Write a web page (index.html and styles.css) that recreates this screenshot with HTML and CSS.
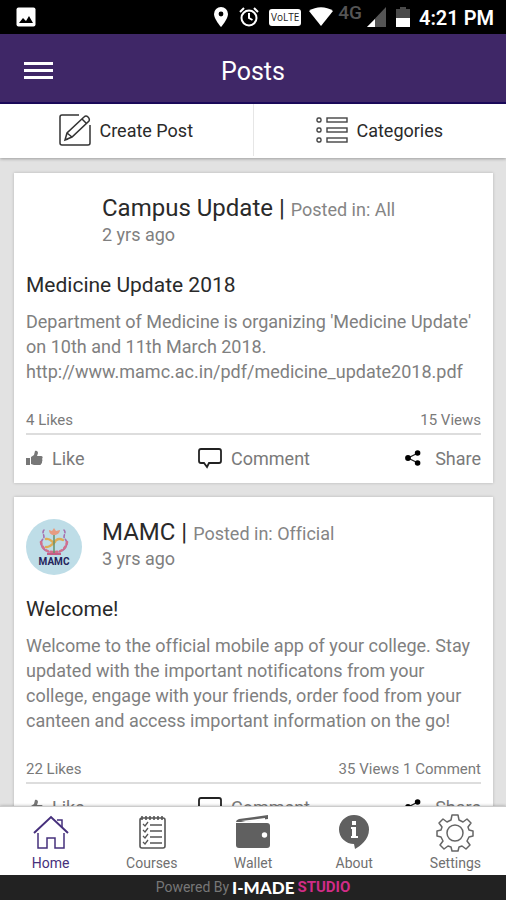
FILE: index.html
```html
<!DOCTYPE html>
<html lang="en">
<head>
    <meta charset="UTF-8">
    <meta name="viewport" content="width=device-width, initial-scale=1.0">
    <title>Posts</title>
    <link rel="stylesheet" href="styles.css">
</head>
<body>

    <!-- Shared icons for the post actions -->
    <svg class="icon-defs" aria-hidden="true">
        <symbol id="icon-like" viewBox="0 0 18 18">
            <path d="M0 9h4v7H0z" fill="#777"/>
            <path d="M5 8l3-2 1-4c2-1 3 1 3 2l-1 3h4c2 0 2 2 1 3 1 1 0 2 0 3 0 1 0 1-1 2 0 1-1 1-2 1H8l-3-1z" fill="#777"/>
        </symbol>
        <symbol id="icon-comment" viewBox="0 0 26 22">
            <path d="M4 2h18q2 0 2 2v10q0 2-2 2H12l-2 4-3-4H4q-2 0-2-2V4q0-2 2-2z" fill="none" stroke="#222" stroke-width="1.8"/>
        </symbol>
        <symbol id="icon-share" viewBox="0 0 16 16">
            <path d="M13 3L3 8l10 5" fill="none" stroke="#222" stroke-width="1.3"/>
            <circle cx="12.6" cy="3" r="2.8"/>
            <circle cx="3" cy="8" r="2.9"/>
            <circle cx="12.6" cy="13" r="2.8"/>
        </symbol>
    </svg>

    <div class="status-bar">
        <svg class="status-picture" width="20" height="20" viewBox="0 0 20 20">
            <rect x="0.500" y="0.500" width="19" height="19" rx="2" fill="#fff"/>
            <path d="M3 16l4-5 3 3 3-5 4 7z"/>
        </svg>
        <svg width="16" height="20" viewBox="0 0 16 20">
            <path d="M8 0a7 7 0 0 0-7 7c0 5 7 13 7 13s7-8 7-13a7 7 0 0 0-7-7z" fill="#fff"/>
            <circle cx="8" cy="7" r="2.4"/>
        </svg>
        <svg class="status-alarm" width="20" height="20" viewBox="0 0 20 20" fill="none" stroke="#fff" stroke-width="2">
            <circle cx="10" cy="11" r="7.5"/>
            <path d="M10 6v5l3.5 2M1 5l4-4M19 5l-4-4"/>
        </svg>
        <span class="volte">VoLTE</span>
        <svg class="status-wifi" width="26" height="20" viewBox="0 0 26 20">
            <path d="M1 4C8-1 18-1 25 4L13 19z" fill="#fff"/>
        </svg>
        <span class="network">4G</span>
        <svg width="21" height="20" viewBox="0 0 21 20">
            <path d="M20 0v20H1z" fill="#555"/>
            <path d="M9 12v8H1z" fill="#fff"/>
        </svg>
        <svg class="status-battery" width="14" height="20" viewBox="0 0 14 20">
            <path d="M4 0h6v2h4v10H0V2h4z" fill="#4a4a4a"/>
            <path d="M0 11h14v9H0z" fill="#fff"/>
        </svg>
        <span class="clock">4:21 PM</span>
    </div>

    <header class="header">
        <button class="menu-btn" aria-label="Menu"><span></span><span></span><span></span></button>
        <h1>Posts</h1>
    </header>

    <div class="toolbar">
        <button>
            <svg width="32" height="32" viewBox="0 0 32 32" fill="none" stroke="#333" stroke-width="1.5">
                <path d="M20 1H3Q1 1 1 3v26q0 2 2 2h26q2 0 2-2V11"/>
                <path d="M6 26l2-7L25 3q2-2 4 0t1 4L13 23zM8 19l5 4M23 5l5 5M6 26l3-1"/>
            </svg>
            Create Post
        </button>
        <button>
            <svg width="32" height="28" viewBox="0 0 32 28" fill="none" stroke="#444" stroke-width="1.4">
                <rect x="1" y="2" width="4" height="4" rx="1.5"/>
                <rect x="11" y="2" width="20" height="4"/>
                <rect x="1" y="12" width="4" height="4" rx="1.5"/>
                <rect x="11" y="12" width="20" height="4"/>
                <rect x="1" y="22" width="4" height="4" rx="1.5"/>
                <rect x="11" y="22" width="20" height="4"/>
            </svg>
            Categories
        </button>
    </div>

    <main class="feed">
        <article class="post">
            <div class="post-header">
                <div class="avatar"></div>
                <div>
                    <div class="author">Campus Update | <span>Posted in: All</span></div>
                    <div class="time">2 yrs ago</div>
                </div>
            </div>
            <h2>Medicine Update 2018</h2>
            <p>Department of Medicine is organizing 'Medicine Update' on 10th and 11th March 2018. http://www.mamc.ac.in/pdf/medicine_update2018.pdf</p>
            <div class="stats"><span>4 Likes</span><span>15 Views</span></div>
            <div class="actions">
                <button class="like"><svg width="18" height="18"><use href="#icon-like"/></svg>Like</button>
                <button><svg width="26" height="22"><use href="#icon-comment"/></svg>Comment</button>
                <button class="share"><svg width="16" height="16"><use href="#icon-share"/></svg>Share</button>
            </div>
        </article>

        <article class="post">
            <div class="post-header">
                <div class="avatar">
                    <svg width="56" height="56" viewBox="0 0 56 56">
                        <circle cx="28" cy="28" r="28" fill="#bedde7"/>
                        <g fill="none" stroke-linecap="round">
                            <path d="M18 11c-3 3 2 6-1 9-4 4-1 11 6 13M38 11c3 3-2 6 1 9 4 4 1 11-6 13" stroke="#a66fae" stroke-width="1.6" stroke-dasharray="3 2"/>
                            <path d="M15 23c1 6 5 10 12 10M41 23c-1 6-5 10-12 10" stroke="#d2708c" stroke-width="2.6" stroke-dasharray="2 3"/>
                            <path d="M20 20c4-1 6 3 8 4 2-4 5-5 9-3M20 28c4 1 6-3 9-5" stroke="#dfac55" stroke-width="2.4"/>
                            <path d="M28 14v20" stroke="#64916b" stroke-width="1.5"/>
                        </g>
                        <path d="M23 11l3 1 2-3 2 3 4-1c0 3-3 5-6 5s-5-2-5-5z" fill="#e69c82"/>
                        <path d="M21 34h14v2H21z" fill="#c55c85"/>
                        <text x="28" y="46" text-anchor="middle">MAMC</text>
                    </svg>
                </div>
                <div>
                    <div class="author">MAMC | <span>Posted in: Official</span></div>
                    <div class="time">3 yrs ago</div>
                </div>
            </div>
            <h2>Welcome!</h2>
            <p>Welcome to the official mobile app of your college. Stay updated with the important notificatons from your college, engage with your friends, order food from your canteen and access important information on the go!</p>
            <div class="stats"><span>22 Likes</span><span>35 Views 1 Comment</span></div>
            <div class="actions">
                <button class="like"><svg width="18" height="18"><use href="#icon-like"/></svg>Like</button>
                <button><svg width="26" height="22"><use href="#icon-comment"/></svg>Comment</button>
                <button class="share"><svg width="16" height="16"><use href="#icon-share"/></svg>Share</button>
            </div>
        </article>
    </main>

    <nav class="bottom-nav">
        <a href="#" class="active">
            <svg width="38" height="38" viewBox="0 0 38 38" fill="none" stroke="#46307c" stroke-width="1.5">
                <path d="M2 19L19 3l17 16" stroke-width="2"/>
                <path d="M25 6h5v7M6 19v15h9V24h8v10h9V19"/>
            </svg>
            Home
        </a>
        <a href="#">
            <svg width="38" height="38" viewBox="0 0 38 38" fill="none" stroke="#555" stroke-width="1.6">
                <rect x="7" y="4" width="25" height="30" rx="2"/>
                <path d="M9 2v4M13 2v4M17 2v4M21 2v4M25 2v4M29 2v4"/>
                <path d="M17 11h12M17 17h12M17 23h12M17 29h12M10 10l2 2 3-4M10 16l2 2 3-4M10 22l2 2 3-4M10 28l2 2 3-4" stroke-width="1.3"/>
            </svg>
            Courses
        </a>
        <a href="#">
            <svg width="38" height="38" viewBox="0 0 38 38" fill="#606060">
                <path d="M2 8q0-2 3-3l29-4v4L9 8z"/>
                <path d="M2 9h31q3 0 3 3v19q0 3-3 3H5q-3 0-3-3z"/>
                <path d="M7 7l24-3v2L12 8z" fill="#fff"/>
                <circle cx="30.500" cy="21" r="2.700" fill="#fff"/>
            </svg>
            Wallet
        </a>
        <a href="#">
            <svg width="38" height="38" viewBox="0 0 38 38">
                <path d="M19 1a15 14.500 0 0 0 0 29l1 5c5-3 14-9 14-19.500A15 14.500 0 0 0 19 1z" fill="#606060"/>
                <path d="M17 7h4v4h-4zM16 13h5v9h2v2h-7v-2h1v-7h-1z" fill="#fff"/>
            </svg>
            About
        </a>
        <a href="#">
            <svg width="38" height="38" viewBox="0 0 38 38" fill="none" stroke="#666" stroke-width="1.5" stroke-linejoin="round">
                <path d="M16 1h6l1 5 4 2 4-3 4 4-3 4 1 3 4 1v5l-4 1-2 4 3 4-4 4-4-3-3 1-1 4h-6l-1-4-3-1-4 3-4-4 3-4-2-4-4-1v-5l4-1 1-3-3-4 4-4 4 3 4-2z"/>
                <circle cx="19" cy="19" r="8"/>
            </svg>
            Settings
        </a>
    </nav>

    <footer class="footer">
        <span>Powered By</span>
        <strong>I-MADE</strong>
        <em>STUDIO</em>
    </footer>

</body>
</html>
```
FILE: styles.css
```css
/* Base Styles */
* {
    box-sizing: border-box;
}

body {
    display: flex;
    flex-direction: column;
    height: 100vh;
    margin: 0;
    background-color: #e2e2e2;
    color: #2a2a2a;
    font-family: Roboto, "Liberation Sans", sans-serif;
    font-variant-ligatures: none;
    overflow: hidden;
}

button {
    padding: 0;
    border: none;
    background: none;
    color: inherit;
    font: inherit;
    cursor: pointer;
}

svg {
    flex-shrink: 0;
}

.icon-defs {
    position: absolute;
    width: 0;
    height: 0;
}

/* Status bar */
.status-bar {
    display: flex;
    align-items: center;
    flex-shrink: 0;
    height: 34px;
    padding: 0 12px 0 16px;
    background-color: #000;
    color: #fff;
}

.status-picture {
    margin-right: auto;
}

.status-alarm {
    margin: 0 10px;
}

.volte {
    padding: 0 2px;
    border-radius: 3px;
    background-color: #fff;
    color: #222;
    font-family: "Open Sans", sans-serif;
    font-size: 10px;
    line-height: 17px;
}

.status-wifi {
    margin: 0 4px 0 7px;
}

.network {
    margin-right: 4px;
    padding-bottom: 8px;
    color: #555;
    font-size: 19px;
    font-weight: 500;
    line-height: 18px;
}

.status-battery {
    margin: 0 9px;
}

.clock {
    padding-top: 2px;
    font-size: 20px;
    font-weight: 600;
}

/* Header */
.header {
    display: grid;
    grid-template-columns: 1fr auto 1fr;
    align-items: center;
    flex-shrink: 0;
    height: 70px;
    padding: 0 24px;
    border-bottom: 2px solid #1b0a5c;
    background-color: #3f2767;
    color: #fff;
}

.header h1 {
    margin: 0;
    padding-top: 6px;
    font-size: 25px;
    font-weight: 400;
}

.menu-btn {
    display: grid;
    gap: 4px;
    width: 29px;
    padding-top: 4px;
}

.menu-btn span {
    height: 3px;
    background-color: #fff;
}

/* Toolbar */
.toolbar {
    display: flex;
    flex-shrink: 0;
    height: 54px;
    padding-bottom: 2px;
    background-color: #fff;
    box-shadow: 0 1px 3px rgba(0, 0, 0, 0.3);
}

.toolbar button {
    display: flex;
    flex: 1;
    justify-content: center;
    align-items: center;
    gap: 8px;
    font-size: 18px;
}

.toolbar button + button {
    border-left: 1px solid #e6e6e6;
}

/* Posts */
.feed {
    flex: 1;
    min-height: 0;
    padding: 15px 13px 15px 14px;
    overflow-y: auto;
    scrollbar-width: none;
}

.post {
    margin-bottom: 14px;
    padding: 22px 12px 0;
    background-color: #fff;
    box-shadow: 0 0 3px rgba(0, 0, 0, 0.2);
}

.post-header {
    display: flex;
    gap: 20px;
    height: 56px;
}

.avatar {
    width: 56px;
    height: 56px;
}

.avatar text {
    fill: #24245c;
    font-size: 10px;
    font-weight: 700;
}

.author {
    font-size: 24px;
    line-height: 27px;
}

.author span {
    color: #858585;
    font-size: 18px;
}

.time {
    color: #808080;
    font-size: 18px;
    line-height: 24px;
}

.post h2 {
    margin: 21px 0 11px;
    font-size: 21px;
    font-weight: 400;
    line-height: 26px;
}

.post p {
    margin: 0 0 26px;
    color: #808080;
    font-size: 18px;
    line-height: 25px;
}

.stats {
    display: flex;
    justify-content: space-between;
    padding-bottom: 3px;
    border-bottom: 2px solid #ddd;
    color: #7a7a7a;
    font-size: 15px;
    line-height: 20px;
}

.actions {
    display: grid;
    grid-template-columns: 1fr auto 1fr;
    height: 48px;
    padding-bottom: 2px;
    color: #7a7a7a;
    font-size: 18px;
}

.actions button {
    display: flex;
    align-items: center;
    gap: 8px;
}

.actions .share {
    justify-content: flex-end;
    gap: 14px;
}

/* Bottom navigation */
.bottom-nav {
    display: flex;
    flex-shrink: 0;
    height: 69px;
    border-top: 1px solid #ccc;
    background-color: #fff;
    box-shadow: 0 0 3px rgba(0, 0, 0, 0.3);
}

.bottom-nav a {
    display: flex;
    flex: 1;
    flex-direction: column;
    align-items: center;
    padding-top: 7px;
    color: #707070;
    font-size: 14px;
    line-height: 22px;
    text-decoration: none;
}

.bottom-nav .active {
    color: #46307c;
}

/* Footer */
.footer {
    display: flex;
    flex-shrink: 0;
    justify-content: center;
    gap: 3px;
    height: 25px;
    background-color: #222;
    color: #777;
    font-size: 14px;
    line-height: 25px;
}

.footer strong {
    color: #fff;
    font-family: Lato, sans-serif;
    font-size: 17px;
    font-weight: 900;
}

.footer em {
    color: #d12c87;
    font-family: "Liberation Sans Narrow", Roboto, sans-serif;
    font-size: 15px;
    font-style: normal;
    font-weight: 700;
}
```
